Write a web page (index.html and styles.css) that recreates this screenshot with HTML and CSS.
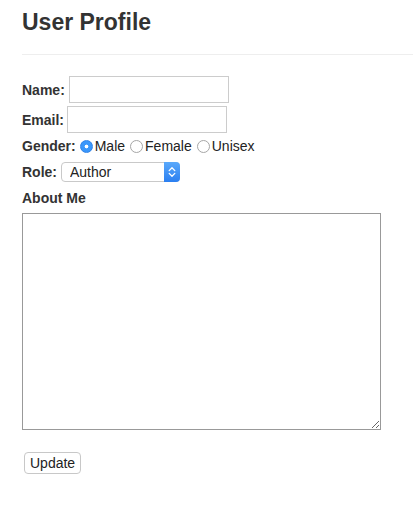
FILE: index.html
```html
<!DOCTYPE html>
<html lang="en">
<head>
<meta charset="utf-8">
<title>User Profile</title>
<link rel="stylesheet" href="styles.css">
</head>
<body>
<div class="page">
  <h1 class="page-title">User Profile</h1>
  <form class="profile-form">
    <div class="row row-name">
      <label class="field-label" for="name">Name:</label>
      <input class="text-input" id="name" type="text">
    </div>
    <div class="row row-email">
      <label class="field-label" for="email">Email:</label>
      <input class="text-input" id="email" type="email">
    </div>
    <div class="row row-gender">
      <span class="field-label">Gender:</span>
      <input class="radio radio-first" type="radio" name="gender" id="g-male" checked>
      <label class="radio-label" for="g-male">Male</label>
      <input class="radio" type="radio" name="gender" id="g-female">
      <label class="radio-label" for="g-female">Female</label>
      <input class="radio" type="radio" name="gender" id="g-unisex">
      <label class="radio-label" for="g-unisex">Unisex</label>
    </div>
    <div class="row row-role">
      <label class="field-label" for="role">Role:</label>
      <span class="select-wrap">
        <select class="select" id="role">
          <option>Author</option>
          <option>Editor</option>
          <option>Admin</option>
        </select>
        <span class="stepper">
          <svg width="8" height="12" viewBox="0 0 8 12" aria-hidden="true">
            <path d="M1.2 4.6 L4 1.8 L6.8 4.6" fill="none" stroke="#fff" stroke-width="1.3" stroke-linecap="round" stroke-linejoin="round"/>
            <path d="M1.2 7.4 L4 10.2 L6.8 7.4" fill="none" stroke="#fff" stroke-width="1.3" stroke-linecap="round" stroke-linejoin="round"/>
          </svg>
        </span>
      </span>
    </div>
    <label class="about-label" for="about">About Me</label>
    <textarea class="about" id="about"></textarea>
    <div class="actions">
      <button class="btn" type="button">Update</button>
    </div>
  </form>
</div>
</body>
</html>
```
FILE: styles.css
```css
html, body {
  margin: 0;
  padding: 0;
  background: #fff;
}
body {
  font-family: "Liberation Sans", Arial, Helvetica, sans-serif;
  font-size: 14px;
  color: #333;
}
.page {
  padding-left: 22px;
}
.page-title {
  margin: 0;
  padding: 10px 0 19px 0;
  font-size: 23px;
  line-height: 25px;
  font-weight: bold;
  color: #333;
  border-bottom: 1px solid #eee;
}
.profile-form {
  display: flex;
  flex-direction: column;
  align-items: flex-start;
  margin-top: 21px;
}
.row {
  display: flex;
  align-items: center;
}
.field-label {
  font-weight: bold;
  color: #333;
}
.row-name, .row-email {
  height: 27px;
  margin-bottom: 3px;
}
.text-input {
  box-sizing: border-box;
  width: 160px;
  height: 27px;
  margin: 0 0 0 4px;
  border: 1px solid #ccc;
  padding: 2px 4px;
  font: 14px "Liberation Sans", Arial, sans-serif;
  outline: none;
}
.row-email .text-input {
  margin-left: 3px;
}
.row-gender {
  height: 20px;
  margin-bottom: 6px;
}
.radio {
  appearance: none;
  -webkit-appearance: none;
  box-sizing: border-box;
  width: 13px;
  height: 13px;
  margin: 0 2px 0 5px;
  border: 1px solid #a6a6a6;
  border-radius: 50%;
  background: #fff;
}
.radio-first {
  margin-left: 4px;
}
.radio:checked {
  border-color: #2f82e8;
  background: radial-gradient(circle, #fff 0 1.6px, #3a97fb 2.2px);
}
.radio-label {
  color: #222;
}
.row-role {
  height: 20px;
}
.select-wrap {
  display: inline-flex;
  box-sizing: border-box;
  width: 119px;
  height: 20px;
  margin-left: 4px;
  border: 1px solid #c9c9c9;
  border-radius: 4px;
  background: #fff;
}
.select {
  appearance: none;
  -webkit-appearance: none;
  flex: 1;
  min-width: 0;
  border: none;
  background: transparent;
  padding: 0 0 0 8px;
  margin: 0;
  font: 14px "Liberation Sans", Arial, sans-serif;
  color: #222;
  outline: none;
}
.stepper {
  display: flex;
  align-items: center;
  justify-content: center;
  width: 16px;
  margin: -1px -1px -1px 0;
  border-radius: 0 4px 4px 0;
  background: linear-gradient(#5aa9fb, #2b7ff1);
}
.about-label {
  display: block;
  margin-top: 6px;
  height: 20px;
  line-height: 20px;
  font-weight: bold;
  color: #333;
}
.about {
  box-sizing: border-box;
  width: 359px;
  height: 217px;
  margin: 5px 0 0 0;
  border: 1px solid #999;
  padding: 2px;
  font: 14px "Liberation Sans", Arial, sans-serif;
  resize: both;
  outline: none;
}
.actions {
  margin-top: 22px;
  padding-left: 2px;
}
.btn {
  box-sizing: border-box;
  height: 22px;
  padding: 0 5px;
  border: 1px solid #c8c8c8;
  border-radius: 4px;
  background: #fff;
  font: 14px "Liberation Sans", Arial, sans-serif;
  color: #222;
}
```
